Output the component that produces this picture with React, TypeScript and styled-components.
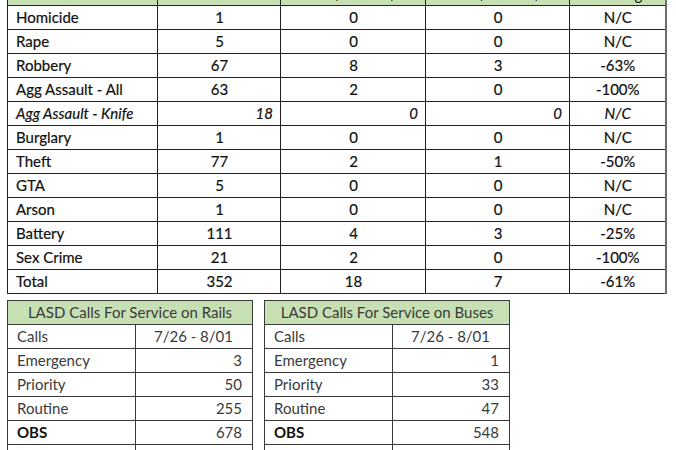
import React from 'react';
import styled, { createGlobalStyle } from 'styled-components';

const GlobalStyle = createGlobalStyle`
  html, body {
    margin: 0;
    padding: 0;
    background: #ffffff;
  }
  body {
    font-family: Lato, "Open Sans", "Liberation Sans", sans-serif;
    overflow: hidden;
  }
`;

type Crime = {
  name: string;
  ytd: number;
  prev: number;
  curr: number;
  change: string;
  italic?: boolean;
};

const crimes: Crime[] = [
  { name: 'Homicide', ytd: 1, prev: 0, curr: 0, change: 'N/C' },
  { name: 'Rape', ytd: 5, prev: 0, curr: 0, change: 'N/C' },
  { name: 'Robbery', ytd: 67, prev: 8, curr: 3, change: '-63%' },
  { name: 'Agg Assault - All', ytd: 63, prev: 2, curr: 0, change: '-100%' },
  { name: 'Agg Assault - Knife', ytd: 18, prev: 0, curr: 0, change: 'N/C', italic: true },
  { name: 'Burglary', ytd: 1, prev: 0, curr: 0, change: 'N/C' },
  { name: 'Theft', ytd: 77, prev: 2, curr: 1, change: '-50%' },
  { name: 'GTA', ytd: 5, prev: 0, curr: 0, change: 'N/C' },
  { name: 'Arson', ytd: 1, prev: 0, curr: 0, change: 'N/C' },
  { name: 'Battery', ytd: 111, prev: 4, curr: 3, change: '-25%' },
  { name: 'Sex Crime', ytd: 21, prev: 2, curr: 0, change: '-100%' },
  { name: 'Total', ytd: 352, prev: 18, curr: 7, change: '-61%' },
];

type CallTable = {
  title: string;
  rows: { label: string; value: number; bold?: boolean }[];
};

const callTables: CallTable[] = [
  {
    title: 'LASD Calls For Service on Rails',
    rows: [
      { label: 'Emergency', value: 3 },
      { label: 'Priority', value: 50 },
      { label: 'Routine', value: 255 },
      { label: 'OBS', value: 678, bold: true },
    ],
  },
  {
    title: 'LASD Calls For Service on Buses',
    rows: [
      { label: 'Emergency', value: 1 },
      { label: 'Priority', value: 33 },
      { label: 'Routine', value: 47 },
      { label: 'OBS', value: 548, bold: true },
    ],
  },
];

const App: React.FC = () => {
  return (
    <>
      <GlobalStyle />
      <Page>
        <CrimeTable>
          <colgroup>
            <col style={{ width: 150 }} />
            <col style={{ width: 123 }} />
            <col style={{ width: 145 }} />
            <col style={{ width: 144 }} />
            <col style={{ width: 96 }} />
          </colgroup>
          <thead>
            <tr>
              <HeadCell $align="left">Crimes</HeadCell>
              <HeadCell>YTD</HeadCell>
              <HeadCell>Wk 07/19 - 07/25</HeadCell>
              <HeadCell>Wk 07/26 - 08/01</HeadCell>
              <HeadCell>% Change</HeadCell>
            </tr>
          </thead>
          <tbody>
            {crimes.map((c) => (
              <CrimeRow key={c.name} $italic={c.italic}>
                <Cell $align="left">{c.name}</Cell>
                <Cell $align={c.italic ? 'right' : 'center'}>{c.ytd}</Cell>
                <Cell $align={c.italic ? 'right' : 'center'}>{c.prev}</Cell>
                <Cell $align={c.italic ? 'right' : 'center'}>{c.curr}</Cell>
                <Cell $align="center">{c.change}</Cell>
              </CrimeRow>
            ))}
          </tbody>
        </CrimeTable>

        <CallsRow>
          {callTables.map((t) => (
            <CallsTable key={t.title}>
              <colgroup>
                <col style={{ width: 128 }} />
                <col style={{ width: 117 }} />
              </colgroup>
              <thead>
                <tr>
                  <CallsTitle colSpan={2}>{t.title}</CallsTitle>
                </tr>
              </thead>
              <tbody>
                <tr>
                  <CallsCell>Calls</CallsCell>
                  <CallsCell $align="center">7/26 - 8/01</CallsCell>
                </tr>
                {t.rows.map((r) => (
                  <tr key={r.label}>
                    <CallsCell $bold={r.bold}>{r.label}</CallsCell>
                    <CallsCell $align="right">{r.value}</CallsCell>
                  </tr>
                ))}
                <tr>
                  <CallsCell>&nbsp;</CallsCell>
                  <CallsCell>&nbsp;</CallsCell>
                </tr>
              </tbody>
            </CallsTable>
          ))}
        </CallsRow>
      </Page>
    </>
  );
};

const Page = styled.div`
  padding-left: 7px;
  margin-top: -19px;
  width: 676px;
  box-sizing: border-box;
`;

const CrimeTable = styled.table`
  border-collapse: collapse;
  table-layout: fixed;
  width: 659px;
  font-size: 15px;
  color: #111111;
  border-right: 2px solid #6e6e6e;
`;

const HeadCell = styled.th<{ $align?: 'left' | 'center' | 'right' }>`
  height: 23px;
  padding: 0 8px;
  font-weight: 400;
  background: #c6e0b4;
  border: 1.5px solid #222222;
  text-align: ${(p) => p.$align || 'center'};
  white-space: nowrap;
  overflow: hidden;
  vertical-align: bottom;
  line-height: 21px;
`;

const CrimeRow = styled.tr<{ $italic?: boolean }>`
  font-style: ${(p) => (p.$italic ? 'italic' : 'normal')};
`;

const Cell = styled.td<{ $align?: 'left' | 'center' | 'right' }>`
  height: 23px;
  padding: 0 7px 0 8px;
  border: 1.5px solid #222222;
  text-align: ${(p) => p.$align || 'center'};
  white-space: nowrap;
  line-height: 21px;
  -webkit-text-stroke: 0.2px #111111;
`;

const CallsRow = styled.div`
  display: flex;
  gap: 11px;
  margin-top: 6px;
`;

const CallsTable = styled.table`
  border-collapse: collapse;
  table-layout: fixed;
  width: 245px;
  font-size: 15px;
  color: #3a3a3a;
`;

const CallsTitle = styled.th`
  height: 23px;
  padding: 0;
  font-weight: 400;
  background: #c6e0b4;
  border: 1.5px solid #3a3a3a;
  text-align: center;
  white-space: nowrap;
  line-height: 21px;
`;

const CallsCell = styled.td<{ $align?: 'left' | 'center' | 'right'; $bold?: boolean }>`
  height: 23px;
  padding: 0 10px 0 9px;
  border: 1.5px solid #3a3a3a;
  text-align: ${(p) => p.$align || 'left'};
  font-weight: ${(p) => (p.$bold ? 700 : 400)};
  color: ${(p) => (p.$bold ? '#111111' : 'inherit')};
  white-space: nowrap;
  line-height: 21px;
`;

export default App;
